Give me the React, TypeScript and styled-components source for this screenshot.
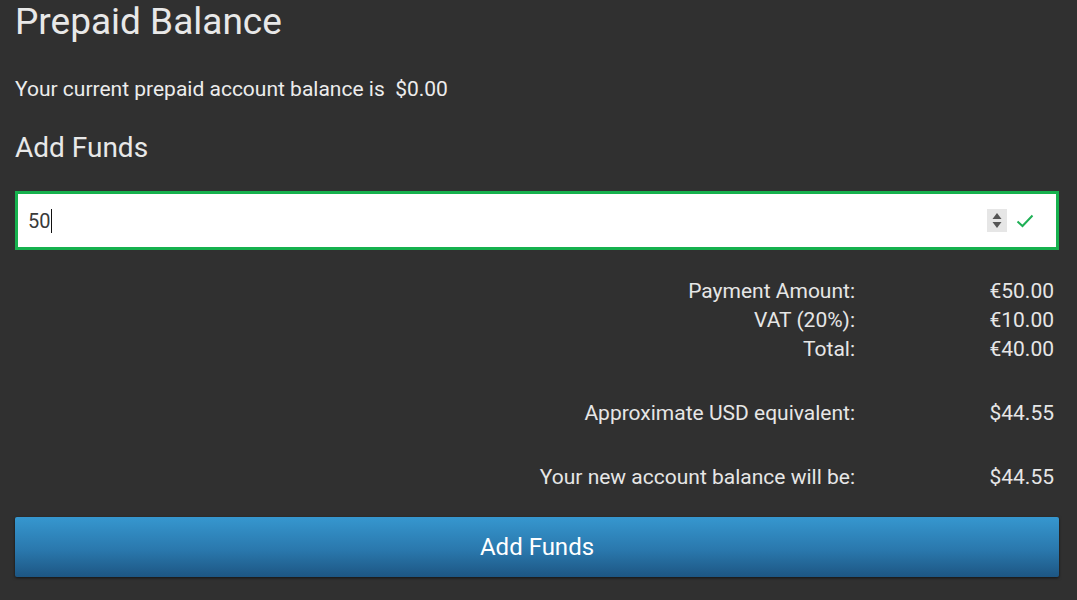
import React from "react";
import styled, { createGlobalStyle } from "styled-components";

const GlobalStyle = createGlobalStyle`
  html, body {
    margin: 0;
    padding: 0;
    background: #303030;
  }
  body {
    font-family: Roboto, "Noto Sans", Arial, sans-serif;
    color: #e6e6e6;
  }
`;

const Page = styled.div`
  width: 1077px;
  height: 600px;
  box-sizing: border-box;
  padding: 0 18px 0 15px;
  display: flex;
  flex-direction: column;
  overflow: hidden;
`;

const Title = styled.h1`
  margin: 0;
  font-size: 37px;
  line-height: 44px;
  font-weight: 400;
  color: #e8e8e8;
`;

const BalanceText = styled.p`
  margin: 31px 0 0;
  font-size: 21px;
  line-height: 28px;
  color: #ececec;
  white-space: pre;
`;

const SubTitle = styled.h2`
  margin: 29px 0 0;
  font-size: 28px;
  line-height: 32px;
  font-weight: 400;
  color: #e8e8e8;
`;

const InputBox = styled.div`
  margin-top: 27px;
  height: 59px;
  box-sizing: border-box;
  border: 3px solid #16b14e;
  background: #ffffff;
  display: flex;
  align-items: center;
  padding: 0 22px 0 10px;
`;

const InputValue = styled.span`
  flex: 1;
  font-size: 20px;
  color: #3a3a3a;
  display: flex;
  align-items: center;
`;

const Caret = styled.span`
  display: inline-block;
  width: 1px;
  height: 24px;
  background: #111;
  margin-left: 1px;
`;

const Spinner = styled.span`
  width: 20px;
  height: 23px;
  background: #e6e6e6;
  display: flex;
  align-items: center;
  justify-content: center;
  margin-right: 9px;
`;

const Summary = styled.div`
  margin-top: 27px;
  display: grid;
  grid-template-columns: 1fr 199px;
  font-size: 21px;
  line-height: 29px;
  color: #e6e6e6;
  padding-right: 5px;
`;

const Cell = styled.div<{ $gap?: number }>`
  text-align: right;
  margin-top: ${({ $gap }) => $gap ?? 0}px;
`;

const SubmitButton = styled.button`
  margin-top: 25px;
  height: 60px;
  width: 100%;
  border: none;
  border-radius: 2px;
  background: linear-gradient(to bottom, #3697cf 0%, #2a78ad 55%, #1d5683 100%);
  box-shadow: 0 1px 3px rgba(0, 0, 0, 0.6);
  color: #ffffff;
  font-family: Roboto, "Noto Sans", Arial, sans-serif;
  font-size: 24px;
  padding-top: 1px;
  cursor: pointer;
`;

const rows = [
  { label: "Payment Amount:", value: "€50.00" },
  { label: "VAT (20%):", value: "€10.00" },
  { label: "Total:", value: "€40.00" },
  { label: "Approximate USD equivalent:", value: "$44.55", gap: 35 },
  { label: "Your new account balance will be:", value: "$44.55", gap: 35 },
];

export default function App() {
  return (
    <>
      <GlobalStyle />
      <Page>
        <Title>Prepaid Balance</Title>
        <BalanceText>Your current prepaid account balance is  $0.00</BalanceText>
        <SubTitle>Add Funds</SubTitle>
        <InputBox>
          <InputValue>
            50
            <Caret />
          </InputValue>
          <Spinner>
            <svg width="10" height="17" viewBox="0 0 10 17">
              <path d="M5 1 L9.5 7 L0.5 7 Z" fill="#555" />
              <path d="M5 16 L9.5 10 L0.5 10 Z" fill="#555" />
            </svg>
          </Spinner>
          <svg width="18" height="14" viewBox="0 0 18 14">
            <path
              d="M1.5 7.5 L6.5 12 L16.5 1.5"
              fill="none"
              stroke="#1fb056"
              strokeWidth="2"
            />
          </svg>
        </InputBox>
        <Summary>
          {rows.map((r) => (
            <React.Fragment key={r.label}>
              <Cell $gap={r.gap}>{r.label}</Cell>
              <Cell $gap={r.gap}>{r.value}</Cell>
            </React.Fragment>
          ))}
        </Summary>
        <SubmitButton>Add Funds</SubmitButton>
      </Page>
    </>
  );
}
